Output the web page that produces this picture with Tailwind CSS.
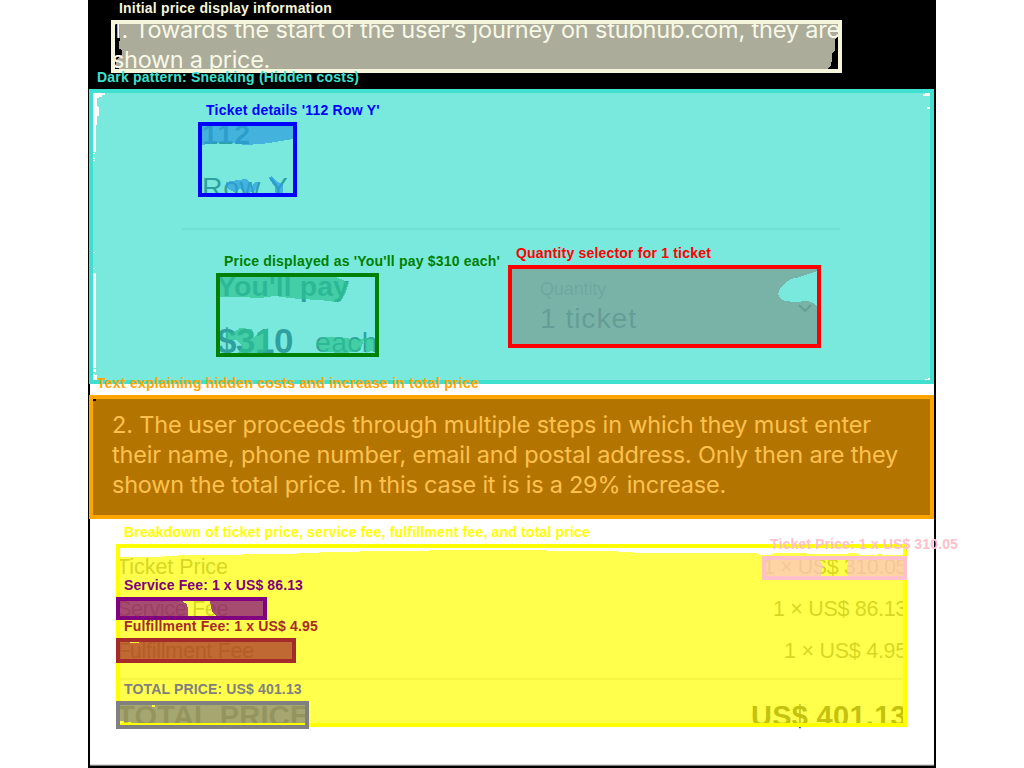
<!DOCTYPE html>
<html lang="en">
<head>
<meta charset="utf-8">
<title>Dark pattern: Sneaking</title>
<script src="https://cdn.jsdelivr.net/npm/@tailwindcss/browser@4"></script>
</head>
<body class="bg-white overflow-hidden">
<div class="relative w-[1024px] h-[768px] overflow-hidden bg-white font-['Liberation_Sans',sans-serif]">

  <!-- Annotated page -->
  <main class="mx-auto w-[848px] h-[768px] flex flex-col border-x-2 border-b-2 border-black bg-white whitespace-nowrap">
    <section data-font="370 23.5px Inter" class="h-[89px] shrink-0 bg-black text-white pt-[15px] pl-[22px] font-['Inter',sans-serif] font-[370] text-[23.5px] leading-[30px]">
      <p><span data-w="728">1. Towards the start of the user’s journey on stubhub.com, they are</span></p>
      <p><span data-w="158">shown a price.</span></p>
    </section>

    <section data-font="400 28.5px Liberation Sans" class="h-[306px] shrink-0 flex flex-col pt-[29px] text-[#080c2a] text-[28.5px] leading-[32px]">
      <p data-font="bold 28.5px Liberation Sans" class="h-[53px] pl-[112px] font-bold"><span data-w="49">112</span></p>
      <p class="h-[57px] pl-[112px]"><span data-w="87">Row Y</span></p>
      <div class="h-[2px] shrink-0 ml-[92px] w-[658px] bg-[#dcdcdc]"></div>
      <div class="flex">
        <div class="w-[450px] pl-[127px] pt-[40px]">
          <p data-font="bold 28.5px Liberation Sans" class="h-[51px] font-bold"><span data-w="132">You'll pay</span></p>
          <p class="flex leading-[40px]"><span data-font="bold 35px Liberation Sans" class="w-[98px] font-bold text-[35px]"><span data-w="76">$310</span></span><span class="pt-[1px]" data-w="63">each</span></p>
        </div>
        <div class="flex items-start pt-[49px]">
          <div class="w-[258px]">
            <p data-font="400 18px Liberation Sans" class="h-[23px] text-[18px] leading-[21px] text-[#808080]"><span data-w="66">Quantity</span></p>
            <p><span data-w="97">1 ticket</span></p>
          </div>
          <svg class="mt-[25px] w-[14px] h-[9px]" viewBox="0 0 14 9" fill="none" stroke="#111" stroke-width="2.2"><path d="M1 1l6 6 6-6"/></svg>
        </div>
      </div>
    </section>

    <section data-font="370 23.5px Inter" class="h-[124px] shrink-0 bg-black text-white pt-[15px] pl-[22px] font-['Inter',sans-serif] font-[370] text-[23.5px] leading-[30px]">
      <p><span data-w="759">2. The user proceeds through multiple steps in which they must enter</span></p>
      <p><span data-w="786">their name, phone number, email and postal address. Only then are they</span></p>
      <p><span data-w="614">shown the total price. In this case it is is a 29% increase.</span></p>
    </section>

    <section data-font="400 21.5px Liberation Sans" class="grow pt-[27px] pl-[27px] pr-[27px] text-[21.5px] leading-[42px] text-[#777]">
      <p class="flex justify-between"><span data-w="111">Ticket Price</span><span data-w="144">1 × US$ 310.05</span></p>
      <p class="flex justify-between"><span data-w="111">Service Fee</span><span data-w="134">1 × US$ 86.13</span></p>
      <p class="flex justify-between"><span data-w="137">Fulfillment Fee</span><span data-w="123">1 × US$ 4.95</span></p>
      <div class="mt-[6px] h-[2px] bg-[#dcdcdc]"></div>
      <p data-font="bold 29px Liberation Sans" class="mt-[20px] flex justify-between font-bold text-[29px] leading-[32px] text-[#333]"><span data-w="193">TOTAL PRICE</span><span data-w="156">US$ 401.13</span></p>
    </section>
  </main>

  <!-- Segmentation masks and bounding boxes -->
  <svg class="absolute inset-0 w-[1024px] h-[768px]" viewBox="0 0 1024 768" shape-rendering="crispEdges">
    <path d="M90 764.5H934" stroke="#ddd"/><path d="M90 765.5H934" stroke="#777"/>
    <g fill-opacity=".7">
      <path fill="#f5f5dc" d="M120 24H838V36L835 39V51L832 53V59L831 66L827 69H119V67L116 66V60L122 54V50L119 49V42L120 40Z"/>
      <path fill="#00f" d="M202 126H293V139L275 142L262 144L245 145L232 143L214 143L202 145Z"/>
      <path fill="#00f" d="M226 182L238 180L246 179L250 182L252 187L255 182L259 182L258 187L253 192L246 193L240 189L234 192L230 190L226 187ZM269 177L272 176L277 182L283 184V193H275V187L270 180Z"/>
      <path fill="#008000" d="M220 277H336L345 281L349 283L346 292L342 299L336 302L320 300L300 299L290 298L275 296L260 298L240 297L220 297Z"/>
      <path fill="#008000" d="M226 331L232 333L240 328L252 329L254 337L260 331L268 328V350L262 353H238L242 346L236 340H226ZM316 344L322 337L340 337L352 339L374 338V350L366 353L364 340L360 351L345 353L322 352Z"/>
      <path fill="#f00" d="M512 269H817V271L812 273L808 274L800 277L791 279L785 283L780 289L778 294L780 298L785 301L795 302L807 301L813 303L817 306V344H512Z"/>
      <path fill="#40e0d0" fill-rule="evenodd" d="M93 93H930V380H93ZM93 93V152H96V125H97V116H99V108L97 105V98H99V97H102V95H105V93ZM93 273V368H96V273ZM93 374V380H98V378H97V375ZM923 94V96H930V93H925V94ZM927 107V109H930V107ZM925 379V380H930V378H928V379ZM93 153H95V154H93ZM93 156H94V157H93ZM93 158H95V159H93ZM93 160H95V161H93ZM93 252H95V253H93ZM93 268H95V269H93ZM93 369H96V372H93Z"/>
      <path fill="#ffa500" d="M96 399H930V515H93V401H96Z"/>
      <path fill="#ff0" d="M120 557L155 557L168 556L188 555L297 554L297 553L340 552L380 551L480 550L610 551L640 553H756L760 555H770L774 553H807V554H848V553H856L860 555H878V554H882V555H903V723H120Z"/>
      <path fill="#800080" d="M120 601H182L187 604L188 609V616H120ZM210 601H263V616H216L212 611Z"/>
      <path fill="#a52a2a" d="M120 642H130V643H139V642H292V659H120Z"/>
      <path fill="#808080" d="M120 705H152V707H155V705H305V723H134L127 722L120 721Z"/>
      <path fill="#ffc0cb" d="M766 560H820L823 566L821 576H766ZM848 560H903V576H848L847 570Z"/>
    </g>
    <g fill="none" stroke-width="4">
      <rect x="113" y="22" width="727" height="49" stroke="#f5f5dc"/>
      <rect x="91" y="91" width="841" height="291" stroke="#40e0d0"/>
      <rect x="200" y="124" width="95" height="71" stroke="#00f"/>
      <rect x="218" y="275" width="159" height="80" stroke="#008000"/>
      <rect x="510" y="267" width="309" height="79" stroke="#f00"/>
      <rect x="91" y="397" width="841" height="120" stroke="#ffa500"/>
      <rect x="118" y="546" width="787" height="179" stroke="#ff0"/>
      <rect x="764" y="558" width="141" height="20" stroke="#ffc0cb"/>
      <rect x="118" y="599" width="147" height="19" stroke="#800080"/>
      <rect x="118" y="640" width="176" height="21" stroke="#a52a2a"/>
    </g>
    <path fill="#808080" fill-rule="evenodd" d="M116 701H309V729H116ZM120 705V725H305V705Z"/>
  </svg>

  <!-- Annotation labels -->
  <div data-font="bold 14px Liberation Sans" class="absolute inset-0 font-bold text-[14px] leading-[16px] whitespace-nowrap">
    <span data-w="213" class="absolute left-[119px] top-0 text-[#f5f5dc]">Initial price display information</span>
    <span data-w="262" class="absolute left-[97px] top-[69px] text-[#40e0d0]">Dark pattern: Sneaking (Hidden costs)</span>
    <span data-w="174" class="absolute left-[206px] top-[102px] text-[#0000ff]">Ticket details '112 Row Y'</span>
    <span data-w="276" class="absolute left-[224px] top-[253px] text-[#008000]">Price displayed as 'You'll pay $310 each'</span>
    <span data-w="195" class="absolute left-[516px] top-[245px] text-[#ff0000]">Quantity selector for 1 ticket</span>
    <span data-w="382" class="absolute left-[97px] top-[375px] text-[#ffa500]">Text explaining hidden costs and increase in total price</span>
    <span data-w="466" class="absolute left-[124px] top-[524px] text-[#ffff00]">Breakdown of ticket price, service fee, fulfillment fee, and total price</span>
    <span data-w="188" class="absolute left-[770px] top-[536px] text-[#ffc0cb]">Ticket Price: 1 x US$ 310.05</span>
    <span data-w="179" class="absolute left-[124px] top-[577px] text-[#800080]">Service Fee: 1 x US$ 86.13</span>
    <span data-w="194" class="absolute left-[124px] top-[618px] text-[#a52a2a]">Fulfillment Fee: 1 x US$ 4.95</span>
    <span data-w="178" class="absolute left-[124px] top-[681px] text-[#808080]">TOTAL PRICE: US$ 401.13</span>
  </div>
</div>
<script>
  // Track each text run to its set width in pixels, measured in the font named by data-font.
  var pen = document.createElement('canvas').getContext('2d');
  document.querySelectorAll('[data-w]').forEach(function (el) {
    pen.font = el.closest('[data-font]').dataset.font.replace(/px (.*)$/, 'px "$1"');
    var gap = (Number(el.dataset.w) - pen.measureText(el.textContent).width) / el.textContent.length;
    el.style.letterSpacing = gap.toFixed(3) + 'px';
  });
</script>
</body>
</html>
